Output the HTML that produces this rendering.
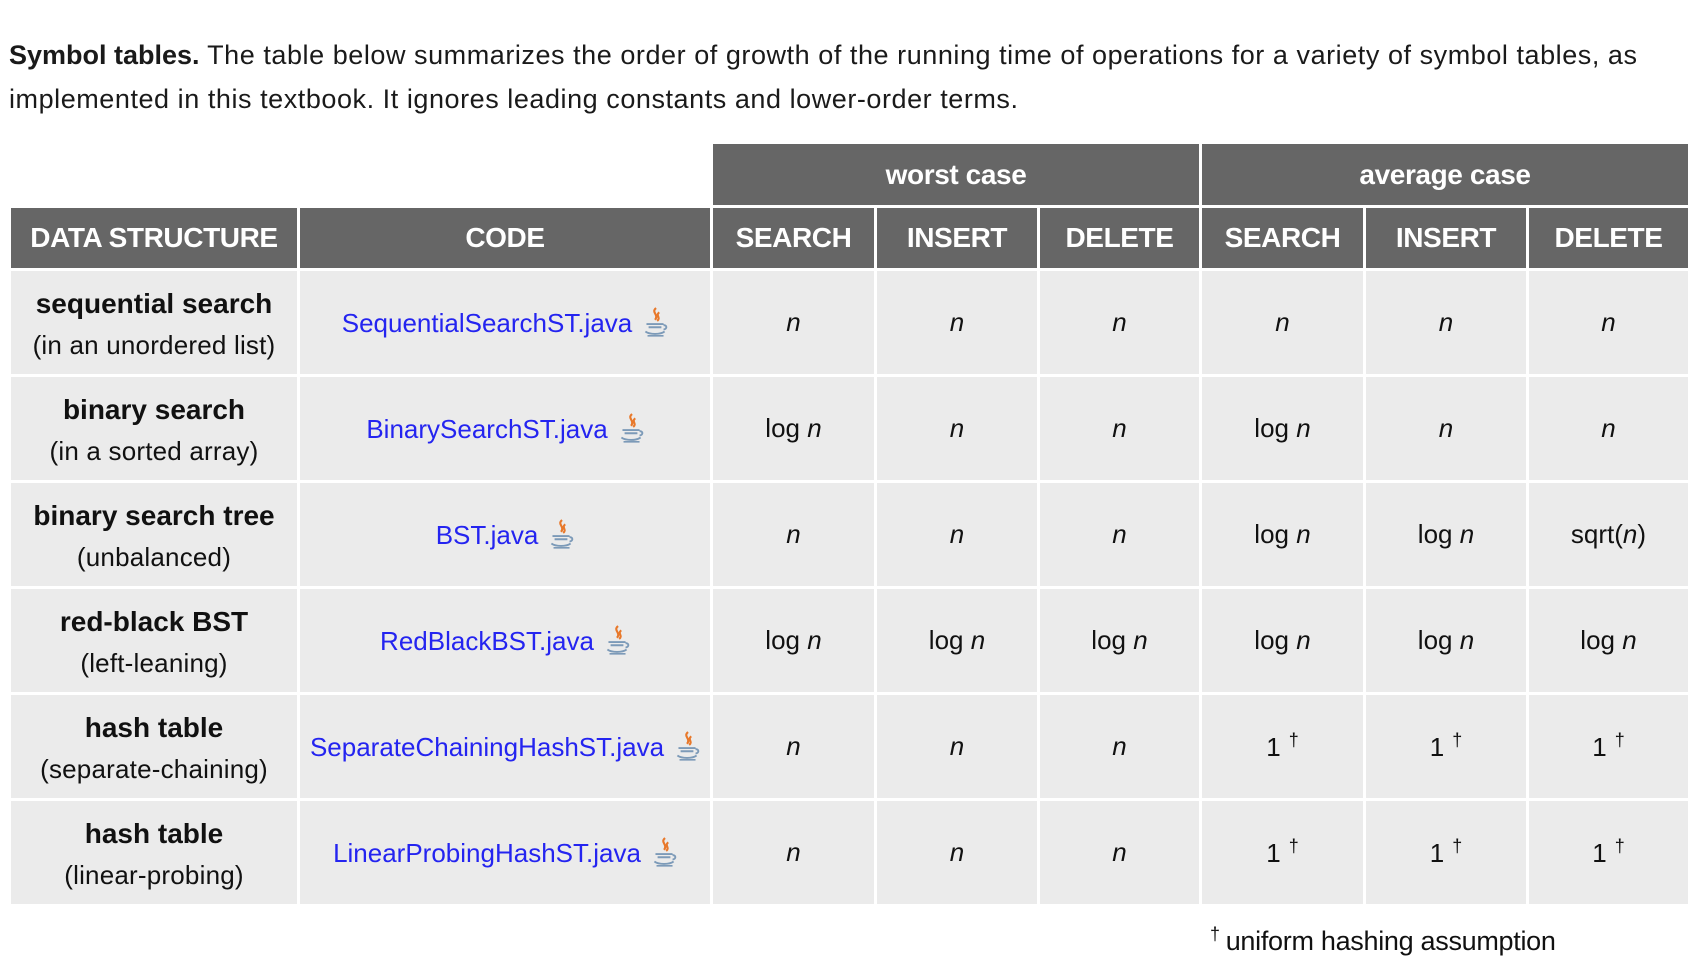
<!DOCTYPE html>
<html><head><meta charset="utf-8"><style>
body{margin:0;background:#fff;width:1700px;height:974px;overflow:hidden;font-family:"Liberation Sans",Arial,sans-serif;color:#111;position:relative}
.p{position:absolute;left:9px;font-size:27px;white-space:nowrap;letter-spacing:0.55px;color:#1a1a1a}
.p b{letter-spacing:0}
table{position:absolute;left:8px;top:141px;border-collapse:collapse;table-layout:fixed}
td{border:3px solid #fff;text-align:center;vertical-align:middle;padding:0;background:#ebebeb;font-size:26px;letter-spacing:0}
td.h{background:#666;color:#fff;font-weight:bold;font-size:28px;letter-spacing:-0.4px}
td.e{background:#fff}
.ds b{font-size:28px;display:block;margin-bottom:10px;letter-spacing:0;position:relative;top:2px}
.ds span{font-size:26px;letter-spacing:0.2px;position:relative;top:2px}
a{color:#2424f0;text-decoration:none}
i{font-style:italic}
svg{vertical-align:-7px;margin-left:10px}
sup{font-size:18px;vertical-align:10px;margin-left:8px}
.fn{position:absolute;left:1210px;top:924px;font-size:27px;letter-spacing:-0.3px;white-space:nowrap}
</style></head><body>
<div class="p" style="top:40px"><b>Symbol tables.</b> The table below summarizes the order of growth of the running time of operations for a variety of symbol tables, as</div>
<div class="p" style="top:84px">implemented in this textbook. It ignores leading constants and lower-order terms.</div>
<svg width="0" height="0" style="position:absolute"><defs><g id="j"><path d="M13 1c-5 4 3 6-1 11M16 5c-4 3 2 5-2 8" stroke="#e8782a" stroke-width="2" fill="none"/><path d="M4 16h16M6 19h12M3 23c4 3 14 3 18 0M20 17c4 0 3 4 0 4" stroke="#7c9ab8" stroke-width="1.8" fill="none"/><path d="M5 27h15" stroke="#7c9ab8" stroke-width="1.5"/></g></defs></svg>
<table>
<colgroup><col style="width:289px"><col style="width:413px"><col style="width:164px"><col style="width:163px"><col style="width:162px"><col style="width:164px"><col style="width:163px"><col style="width:162px"></colgroup>
<tr style="height:64px"><td class="e"></td><td class="e"></td><td class="h" colspan="3">worst case</td><td class="h" colspan="3">average case</td></tr>
<tr style="height:63px"><td class="h">DATA STRUCTURE</td><td class="h">CODE</td><td class="h">SEARCH</td><td class="h">INSERT</td><td class="h">DELETE</td><td class="h">SEARCH</td><td class="h">INSERT</td><td class="h">DELETE</td></tr>
<tr style="height:106px"><td class="ds"><b>sequential search</b><span>(in an unordered list)</span></td><td><a>SequentialSearchST.java</a><svg width="26" height="32" viewBox="0 0 24 30"><use href="#j"/></svg></td><td><i>n</i></td><td><i>n</i></td><td><i>n</i></td><td><i>n</i></td><td><i>n</i></td><td><i>n</i></td></tr>
<tr style="height:106px"><td class="ds"><b>binary search</b><span>(in a sorted array)</span></td><td><a>BinarySearchST.java</a><svg width="26" height="32" viewBox="0 0 24 30"><use href="#j"/></svg></td><td>log <i>n</i></td><td><i>n</i></td><td><i>n</i></td><td>log <i>n</i></td><td><i>n</i></td><td><i>n</i></td></tr>
<tr style="height:106px"><td class="ds"><b>binary search tree</b><span>(unbalanced)</span></td><td><a>BST.java</a><svg width="26" height="32" viewBox="0 0 24 30"><use href="#j"/></svg></td><td><i>n</i></td><td><i>n</i></td><td><i>n</i></td><td>log <i>n</i></td><td>log <i>n</i></td><td>sqrt(<i>n</i>)</td></tr>
<tr style="height:106px"><td class="ds"><b>red-black BST</b><span>(left-leaning)</span></td><td><a>RedBlackBST.java</a><svg width="26" height="32" viewBox="0 0 24 30"><use href="#j"/></svg></td><td>log <i>n</i></td><td>log <i>n</i></td><td>log <i>n</i></td><td>log <i>n</i></td><td>log <i>n</i></td><td>log <i>n</i></td></tr>
<tr style="height:106px"><td class="ds"><b>hash table</b><span>(separate-chaining)</span></td><td><a>SeparateChainingHashST.java</a><svg width="26" height="32" viewBox="0 0 24 30"><use href="#j"/></svg></td><td><i>n</i></td><td><i>n</i></td><td><i>n</i></td><td>1<sup>†</sup></td><td>1<sup>†</sup></td><td>1<sup>†</sup></td></tr>
<tr style="height:106px"><td class="ds"><b>hash table</b><span>(linear-probing)</span></td><td><a>LinearProbingHashST.java</a><svg width="26" height="32" viewBox="0 0 24 30"><use href="#j"/></svg></td><td><i>n</i></td><td><i>n</i></td><td><i>n</i></td><td>1<sup>†</sup></td><td>1<sup>†</sup></td><td>1<sup>†</sup></td></tr>
</table>
<div class="fn"><sup style="margin:0 6px 0 0">†</sup>uniform hashing assumption</div>
</body></html>
